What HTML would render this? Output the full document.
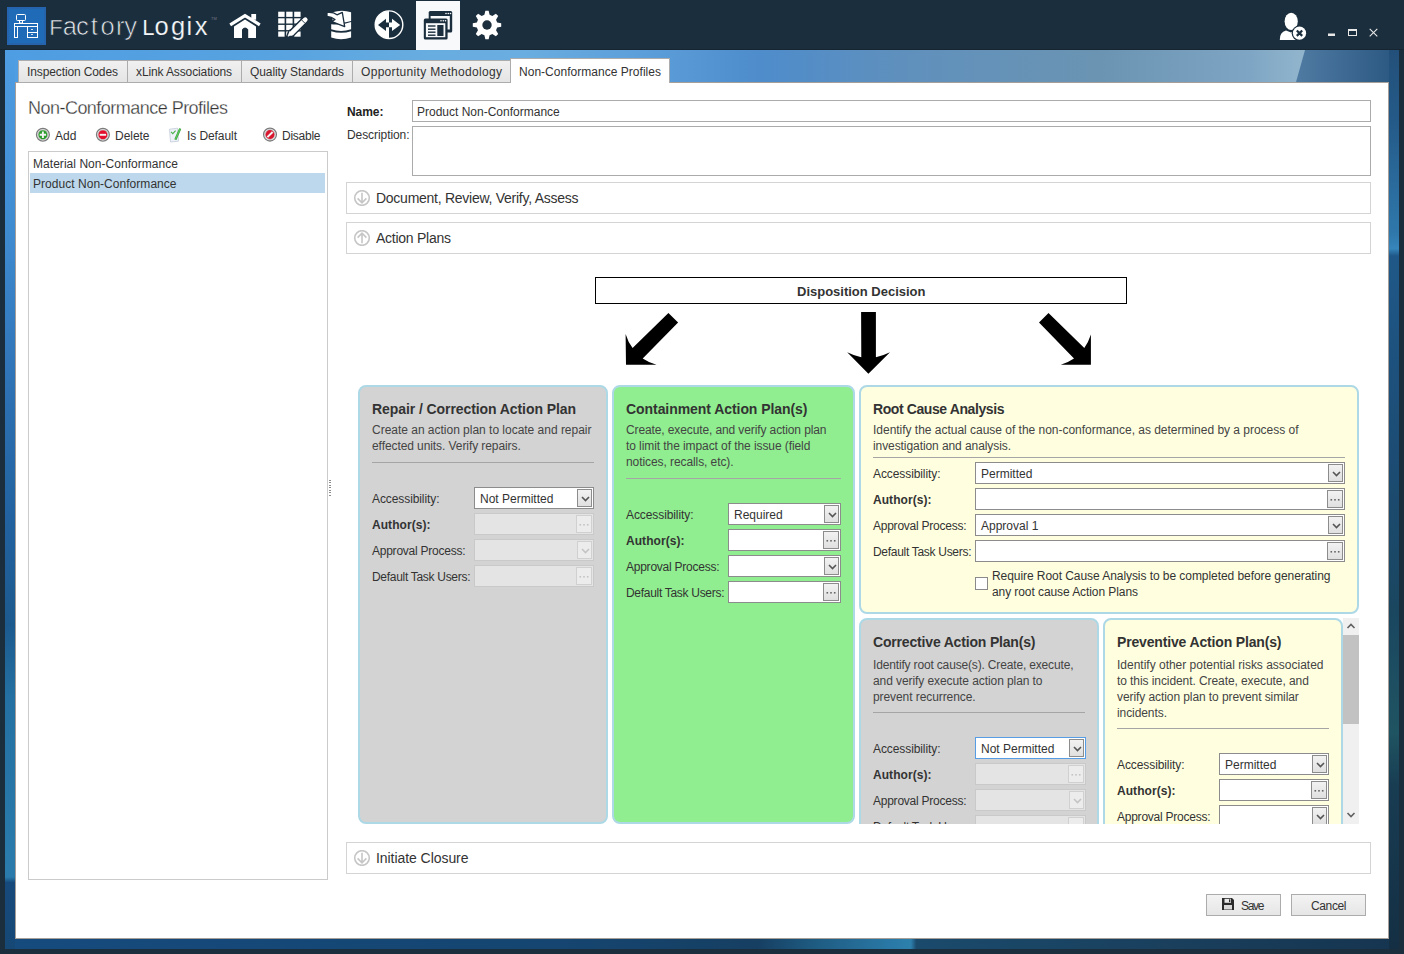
<!DOCTYPE html><html><head><meta charset="utf-8"><style>
html,body{margin:0;padding:0;}
body{width:1404px;height:954px;position:relative;overflow:hidden;background:#1b2e3d;font-family:'Liberation Sans', sans-serif;}
.t{position:absolute;white-space:nowrap;font-family:'Liberation Sans', sans-serif;}
</style></head><body>
<div style="position:absolute;left:5px;top:50px;width:1394px;height:899px;background:#1d5a92"></div>
<div style="position:absolute;left:5px;top:50px;width:10px;height:899px;background:linear-gradient(180deg,#4f9de2 0%,#3f8bd2 20%,#2c6fb0 40%,#2262a0 52%,#1c5a8e 64%,#2470a2 72%,#2a7aac 90%,#2a7aac 92%,#174a7c 92.6%,#164876 100%)"></div>
<div style="position:absolute;left:1389px;top:50px;width:10px;height:899px;background:linear-gradient(180deg,#23507a 0%,#245a88 8%,#2f78ac 20.5%,#3685bb 22.1%,#1f5888 22.9%,#1c4c74 45%,#1a4660 62%,#1f5462 76%,#183c52 82%,#142f44 100%)"></div>
<div style="position:absolute;left:15px;top:939px;width:1374px;height:10px;background:linear-gradient(90deg,#164b7e 0%,#154570 40%,#163f62 54%,#1e5a80 58%,#2a7aa8 64%,#2d80ac 65.2%,#1a4a6c 65.6%,#1a4260 80%,#163550 100%)"></div>
<div style="position:absolute;left:15px;top:50px;width:1374px;height:32px;overflow:hidden;background:linear-gradient(90deg,#4f9de2 0%,#58a3e0 20%,#68ade0 30%,#6aade0 37%,#60a3dc 43%,#5a9cd8 47%,#4e8ccb 54.2%,#5f90bd 64.4%,#6b94b2 79%,#7ea6c4 89.9%,#90b4cc 93.5%)"><div style="position:absolute;left:1281px;top:0;width:120px;height:32px;background:linear-gradient(90deg,#4f7ba3,#23507a);clip-path:polygon(9px 0,120px 0,120px 32px,0 32px)"></div></div>
<div style="position:absolute;left:0;top:49px;width:1404px;height:1px;background:#16252f"></div>
<div style="position:absolute;left:15px;top:82px;width:1374px;height:857px;box-sizing:border-box;background:#fff;border:1px solid #a59e99"></div>
<div style="position:absolute;left:7px;top:7px;width:39px;height:38px;background:#1f6bb7;box-shadow:inset 0 0 0 2px #2563ad"></div>
<svg style="position:absolute;left:7px;top:7px" width="39" height="38" viewBox="0 0 39 38">
<g fill="none" stroke="#fff" stroke-width="1">
<rect x="9.5" y="7.5" width="9" height="6" rx="1"/>
<rect x="12.5" y="13.5" width="3" height="2.5"/>
<rect x="7.5" y="16.5" width="23" height="3"/>
<rect x="7.5" y="19.5" width="3" height="11"/>
<rect x="20.5" y="19.5" width="10" height="11"/>
<line x1="20.5" y1="25.5" x2="30.5" y2="25.5"/>
</g>
<rect x="24" y="22" width="2" height="1" fill="#cfe0f0"/><rect x="24" y="27" width="2" height="1" fill="#cfe0f0"/>
</svg>
<div class="t" style="left:49.3px;top:17px;font-size:22px;line-height:22px;color:#e4e8ec;-webkit-text-stroke:0.55px #1b2e3d">F</div>
<div class="t" style="left:62.7px;top:14px;font-size:25.5px;line-height:25.5px;color:#e4e8ec;-webkit-text-stroke:0.7px #1b2e3d">a</div>
<div class="t" style="left:76.0px;top:14px;font-size:25.5px;line-height:25.5px;color:#e4e8ec;-webkit-text-stroke:0.7px #1b2e3d">c</div>
<div class="t" style="left:90.7px;top:14px;font-size:25.5px;line-height:25.5px;color:#e4e8ec;-webkit-text-stroke:0.7px #1b2e3d">t</div>
<div class="t" style="left:100.5px;top:14px;font-size:25.5px;line-height:25.5px;color:#e4e8ec;-webkit-text-stroke:0.7px #1b2e3d">o</div>
<div class="t" style="left:116.0px;top:14px;font-size:25.5px;line-height:25.5px;color:#e4e8ec;-webkit-text-stroke:0.7px #1b2e3d">r</div>
<div class="t" style="left:124.3px;top:14px;font-size:25.5px;line-height:25.5px;color:#e4e8ec;-webkit-text-stroke:0.7px #1b2e3d">y</div>
<div class="t" style="left:142.2px;top:17px;font-size:22px;line-height:22px;color:#f4f6f8;-webkit-text-stroke:0.1px #1b2e3d">L</div>
<div class="t" style="left:154.4px;top:14px;font-size:25.5px;line-height:25.5px;color:#f4f6f8;-webkit-text-stroke:0.2px #1b2e3d">o</div>
<div class="t" style="left:171.0px;top:14px;font-size:25.5px;line-height:25.5px;color:#f4f6f8;-webkit-text-stroke:0.2px #1b2e3d">g</div>
<div class="t" style="left:186.4px;top:14px;font-size:25.5px;line-height:25.5px;color:#f4f6f8;-webkit-text-stroke:0.2px #1b2e3d">i</div>
<div class="t" style="left:194.7px;top:14px;font-size:25.5px;line-height:25.5px;color:#f4f6f8;-webkit-text-stroke:0.2px #1b2e3d">x</div>
<div class="t" style="left:211px;top:17px;font-size:4px;line-height:4px;color:#778">TM</div>
<svg style="position:absolute;left:228px;top:12px" width="34" height="28" viewBox="0 0 34 28">
<path d="M2.2 12.8 L17 3.6 L31.8 12.8" fill="none" stroke="#fff" stroke-width="3.2"/>
<rect x="23.3" y="2" width="4.8" height="5.7" fill="#fff"/>
<path d="M6 14.5 L17 7.6 L28 14.5 L28 26 L20.2 26 L20.2 17.5 Q17 13.5 14 17.5 L14 26 L6 26 Z" fill="#fff"/>
</svg>
<svg style="position:absolute;left:276px;top:8px" width="36" height="32" viewBox="0 0 36 32"><rect x="2.2" y="3.7" width="6.4" height="5.2" fill="#fff"/><rect x="10.2" y="3.7" width="6.4" height="5.2" fill="#fff"/><rect x="18.2" y="3.7" width="6.4" height="5.2" fill="#fff"/><rect x="2.2" y="10.3" width="6.4" height="5.2" fill="#fff"/><rect x="10.2" y="10.3" width="6.4" height="5.2" fill="#fff"/><rect x="18.2" y="10.3" width="6.4" height="5.2" fill="#fff"/><rect x="2.2" y="16.9" width="6.4" height="5.2" fill="#fff"/><rect x="10.2" y="16.9" width="6.4" height="5.2" fill="#fff"/><rect x="18.2" y="16.9" width="6.4" height="5.2" fill="#fff"/><rect x="2.2" y="23.499999999999996" width="6.4" height="5.2" fill="#fff"/><rect x="10.2" y="23.499999999999996" width="6.4" height="5.2" fill="#fff"/><rect x="18.2" y="23.499999999999996" width="6.4" height="5.2" fill="#fff"/><g transform="translate(-276 -8)"><path d="M305.3 19.6 L291.2 33.7" stroke="#1b2e3d" stroke-width="7.4" stroke-linecap="round"/><path d="M290 30.6 L286.6 37.6 L293.7 34.2 Z" fill="#1b2e3d" stroke="#1b2e3d" stroke-width="2.2" stroke-linejoin="round"/><path d="M305.3 19.6 L291.6 33.3" stroke="#fff" stroke-width="4.6" stroke-linecap="round"/><path d="M289.9 31.5 L288 36.2 L292.7 34.3 Z" fill="#fff" stroke="#fff" stroke-width="0.8" stroke-linejoin="round"/><path d="M301.6 19.9 L304.9 23.2" stroke="#1b2e3d" stroke-width="0.9"/></g></svg>
<svg style="position:absolute;left:324px;top:8px" width="30" height="34" viewBox="324 8 30 34">
<path d="M332.6 12.2 Q342 9.2 351.1 12.2 L351.1 21 Q345 23 338 22.6 L332.6 21.6 Z" fill="#fff"/>
<path d="M331.2 24.2 Q342 25.2 351.1 21.9 L351.1 29.3 Q341 32.6 331.2 29.3 Z" fill="#fff"/>
<path d="M331.2 31.3 Q341 34.4 351.1 31.3 L351.1 37.4 Q341 40.9 331.2 37.4 Z" fill="#fff"/>
<path d="M327 12.4 Q333 11.6 337 14.8 L342.3 12.4 L344.7 26.6 L331.8 21.6 L335 19.4 Q331.5 16.6 327 16.4 Z" fill="#fff" stroke="#1b2e3d" stroke-width="1.3" stroke-linejoin="round"/>
</svg>
<svg style="position:absolute;left:373px;top:9px" width="32" height="32" viewBox="0 0 32 32">
<circle cx="16" cy="15.7" r="13.8" fill="#1b2e3d" stroke="#fff" stroke-width="1.4"/>
<path d="M16 1.9 A13.8 13.8 0 0 0 16 29.5 Z" fill="#fff"/>
<path d="M5 15.9 L13 9.8 L13 13.6 L16.1 13.6 L16.1 18.2 L13 18.2 L13 22 Z" fill="#1b2e3d"/>
<path d="M27.2 15.9 L19 9.8 L19 13.6 L16 13.6 L16 18.2 L19 18.2 L19 22 Z" fill="#fff"/>
</svg>
<div style="position:absolute;left:416px;top:1px;width:44px;height:49px;background:#f8f9fb"></div>
<svg style="position:absolute;left:416px;top:1px" width="44" height="49" viewBox="0 0 44 49">
<rect x="12.7" y="10" width="23.5" height="21.4" rx="1.5" fill="#1b2e3d"/>
<rect x="14.6" y="15" width="19.2" height="13.5" fill="#f8f9fb"/>
<rect x="7.8" y="17.5" width="23.8" height="21" rx="1.5" fill="#1b2e3d"/>
<rect x="9.9" y="22.2" width="19.4" height="14" fill="#f8f9fb"/>
<g fill="#f8f9fb"><circle cx="30" cy="12.5" r="0.8"/><circle cx="32.3" cy="12.5" r="0.8"/><circle cx="34.5" cy="12.5" r="0.8"/>
<circle cx="25" cy="19.8" r="0.8"/><circle cx="27.3" cy="19.8" r="0.8"/><circle cx="29.5" cy="19.8" r="0.8"/></g>
<g fill="#1b2e3d"><rect x="12" y="24.3" width="7.5" height="1.4"/><rect x="12" y="27.5" width="7.5" height="1.4"/><rect x="12" y="30.5" width="7.5" height="1.4"/><rect x="12" y="33.5" width="7.5" height="1.4"/>
<rect x="21.3" y="24" width="6.2" height="11"/></g>
</svg>
<svg style="position:absolute;left:463px;top:1px" width="48" height="48" viewBox="0 0 48 48">
<polygon points="21.40,13.83 22.36,9.79 25.64,9.79 26.60,13.83 29.36,14.97 32.88,12.79 35.21,15.12 33.03,18.64 34.17,21.40 38.21,22.36 38.21,25.64 34.17,26.60 33.03,29.36 35.21,32.88 32.88,35.21 29.36,33.03 26.60,34.17 25.64,38.21 22.36,38.21 21.40,34.17 18.64,33.03 15.12,35.21 12.79,32.88 14.97,29.36 13.83,26.60 9.79,25.64 9.79,22.36 13.83,21.40 14.97,18.64 12.79,15.12 15.12,12.79 18.64,14.97" fill="#fff"/>
<circle cx="24" cy="24" r="4.7" fill="#1b2e3d"/>
</svg>
<svg style="position:absolute;left:1276px;top:8px" width="34" height="34" viewBox="0 0 34 34">
<ellipse cx="15.2" cy="13.3" rx="6.6" ry="8.6" fill="#fff"/>
<path d="M3.8 32 Q3.5 24 10 22.5 L15 24.5 L20 22.5 Q23 23.5 24 25 L24 32 Z" fill="#fff"/>
<circle cx="23.5" cy="25.2" r="7.8" fill="#1b2e3d"/>
<circle cx="23.5" cy="25.2" r="6.6" fill="#fff"/>
<path d="M20.8 22.5 L26.2 27.9 M26.2 22.5 L20.8 27.9" stroke="#1b2e3d" stroke-width="2.2"/>
</svg>
<div style="position:absolute;left:1328px;top:34px;width:7px;height:2px;box-sizing:border-box;background:#e8e8e8"></div>
<div style="position:absolute;left:1328px;top:33px;width:7px;height:1px;box-sizing:border-box;background:rgba(232,232,232,0.5)"></div>
<div style="position:absolute;left:1348px;top:29px;width:9px;height:7px;box-sizing:border-box;border:1px solid #e8e8e8;border-top-width:2px"></div>
<svg style="position:absolute;left:1369px;top:28px" width="9" height="9" viewBox="0 0 9 9"><path d="M0.7 0.9 L8.3 8.3 M8.3 0.9 L0.7 8.3" stroke="#e8e8e8" stroke-width="1.1"/></svg>
<div style="position:absolute;left:18px;top:60px;width:110px;height:23px;box-sizing:border-box;border:1px solid #acacac;background:linear-gradient(#f0f0f0,#e5e5e5)"></div>
<div class="t" style="left:27px;top:66px;font-size:12px;line-height:12px;font-weight:400;color:#333;letter-spacing:-0.116px;">Inspection Codes</div>
<div style="position:absolute;left:127px;top:60px;width:115px;height:23px;box-sizing:border-box;border:1px solid #acacac;background:linear-gradient(#f0f0f0,#e5e5e5)"></div>
<div class="t" style="left:136px;top:66px;font-size:12px;line-height:12px;font-weight:400;color:#333;letter-spacing:-0.121px;">xLink Associations</div>
<div style="position:absolute;left:241px;top:60px;width:112px;height:23px;box-sizing:border-box;border:1px solid #acacac;background:linear-gradient(#f0f0f0,#e5e5e5)"></div>
<div class="t" style="left:250px;top:66px;font-size:12px;line-height:12px;font-weight:400;color:#333;letter-spacing:-0.087px;">Quality Standards</div>
<div style="position:absolute;left:352px;top:60px;width:159px;height:23px;box-sizing:border-box;border:1px solid #acacac;background:linear-gradient(#f0f0f0,#e5e5e5)"></div>
<div class="t" style="left:361px;top:66px;font-size:12px;line-height:12px;font-weight:400;color:#333;letter-spacing:0.314px;">Opportunity Methodology</div>
<div style="position:absolute;left:510px;top:58px;width:160px;height:25px;box-sizing:border-box;border:1px solid #acacac;border-bottom:none;background:#fff"></div>
<div class="t" style="left:519px;top:66px;font-size:12px;line-height:12px;font-weight:400;color:#333;letter-spacing:0.026px;">Non-Conformance Profiles</div>
<div class="t" style="left:28px;top:99px;font-size:18px;line-height:18px;font-weight:400;color:#333;letter-spacing:-0.526px;-webkit-text-stroke:0.3px #fff;">Non-Conformance Profiles</div>
<svg style="position:absolute;left:35px;top:127px" width="16" height="16" viewBox="0 0 16 16">
<circle cx="7.9" cy="7.8" r="6.4" fill="#fff" stroke="#7c7c7c" stroke-width="1.3"/>
<circle cx="7.9" cy="7.8" r="5" fill="none" stroke="#a8a8a8" stroke-width="0.7"/>
<circle cx="7.9" cy="7.8" r="4.5" fill="#2b9b2b"/>
<path d="M7.9 4.6 V11 M4.7 7.8 H11.1" stroke="#f4f4f4" stroke-width="1.9"/></svg>
<div class="t" style="left:55px;top:130px;font-size:12px;line-height:12px;font-weight:400;color:#333;letter-spacing:0.07px;">Add</div>
<svg style="position:absolute;left:95px;top:127px" width="16" height="16" viewBox="0 0 16 16">
<circle cx="7.9" cy="7.8" r="6.4" fill="#fff" stroke="#7c7c7c" stroke-width="1.3"/>
<circle cx="7.9" cy="7.8" r="5" fill="none" stroke="#a8a8a8" stroke-width="0.7"/>
<circle cx="7.9" cy="7.8" r="4.5" fill="#e2102c"/>
<path d="M4.7 7.8 H11.1" stroke="#f4f4f4" stroke-width="1.9"/></svg>
<div class="t" style="left:115px;top:130px;font-size:12px;line-height:12px;font-weight:400;color:#333;letter-spacing:-0.037px;">Delete</div>
<svg style="position:absolute;left:168px;top:127px" width="14" height="16" viewBox="0 0 14 16">
<path d="M1.5 2.2 L9.5 1.2 L10.5 14.2 L2.5 15 Z" fill="#eef2f8" stroke="#c4ccd8" stroke-width="0.8"/>
<path d="M3 4.8 L4.8 6.6 L7.6 3.6" fill="none" stroke="#4cb04c" stroke-width="1.1"/>
<path d="M12.2 1.6 L7.4 12.6" stroke="#3a9a3a" stroke-width="2.3"/><path d="M12.2 1.6 L7.4 12.6" stroke="#5cc85c" stroke-width="1.2"/></svg>
<div class="t" style="left:187px;top:130px;font-size:12px;line-height:12px;font-weight:400;color:#333;letter-spacing:-0.078px;">Is Default</div>
<svg style="position:absolute;left:262px;top:127px" width="16" height="16" viewBox="0 0 16 16">
<circle cx="8" cy="7.6" r="6.4" fill="#fff" stroke="#7c7c7c" stroke-width="1.3"/>
<circle cx="8" cy="7.6" r="5" fill="none" stroke="#a8a8a8" stroke-width="0.7"/>
<circle cx="8" cy="7.6" r="4.5" fill="#d8162e"/>
<path d="M5.4 10.2 L10.6 5" stroke="#f4f4f4" stroke-width="1.9"/></svg>
<div class="t" style="left:282px;top:130px;font-size:12px;line-height:12px;font-weight:400;color:#333;letter-spacing:-0.255px;">Disable</div>
<div style="position:absolute;left:28px;top:151px;width:300px;height:729px;box-sizing:border-box;border:1px solid #cbcbcb;background:#fff"></div>
<div style="position:absolute;left:30px;top:173px;width:295px;height:20px;box-sizing:border-box;background:#bdd8ec"></div>
<div class="t" style="left:33px;top:158px;font-size:12px;line-height:12px;font-weight:400;color:#333;letter-spacing:0.041px;">Material Non-Conformance</div>
<div class="t" style="left:33px;top:178px;font-size:12px;line-height:12px;font-weight:400;color:#333;letter-spacing:0.035px;">Product Non-Conformance</div>
<div style="position:absolute;left:329px;top:480px;width:2px;height:1px;box-sizing:border-box;background:#8c8c8c"></div>
<div style="position:absolute;left:329px;top:482px;width:2px;height:1px;box-sizing:border-box;background:#8c8c8c"></div>
<div style="position:absolute;left:329px;top:485px;width:2px;height:1px;box-sizing:border-box;background:#8c8c8c"></div>
<div style="position:absolute;left:329px;top:487px;width:2px;height:1px;box-sizing:border-box;background:#8c8c8c"></div>
<div style="position:absolute;left:329px;top:490px;width:2px;height:1px;box-sizing:border-box;background:#8c8c8c"></div>
<div style="position:absolute;left:329px;top:492px;width:2px;height:1px;box-sizing:border-box;background:#8c8c8c"></div>
<div style="position:absolute;left:329px;top:495px;width:2px;height:1px;box-sizing:border-box;background:#8c8c8c"></div>
<div class="t" style="left:347px;top:106px;font-size:12px;line-height:12px;font-weight:700;color:#222;letter-spacing:-0.047px;">Name:</div>
<div style="position:absolute;left:412px;top:100px;width:959px;height:22px;box-sizing:border-box;border:1px solid #ababab;background:#fff"></div>
<div class="t" style="left:417px;top:106px;font-size:12px;line-height:12px;font-weight:400;color:#333;">Product Non-Conformance</div>
<div class="t" style="left:347px;top:129px;font-size:12px;line-height:12px;font-weight:400;color:#333;letter-spacing:-0.078px;">Description:</div>
<div style="position:absolute;left:412px;top:126px;width:959px;height:50px;box-sizing:border-box;border:1px solid #ababab;background:#fff"></div>
<div style="position:absolute;left:346px;top:182px;width:1025px;height:32px;box-sizing:border-box;border:1px solid #d4d4d4;background:#fff"></div>
<svg style="position:absolute;left:353px;top:190px" width="18" height="16" viewBox="0 0 18 16"><circle cx="9" cy="8" r="7.3" fill="none" stroke="#c6c6c6" stroke-width="1.6"/><path d="M9 2.8 V12.8 M4.6 8.4 L9 12.8 L13.4 8.4" fill="none" stroke="#c6c6c6" stroke-width="1.6"/></svg>
<div class="t" style="left:376px;top:191px;font-size:14px;line-height:14px;font-weight:400;color:#333;letter-spacing:-0.262px;">Document, Review, Verify, Assess</div>
<div style="position:absolute;left:346px;top:222px;width:1025px;height:32px;box-sizing:border-box;border:1px solid #d4d4d4;background:#fff"></div>
<svg style="position:absolute;left:353px;top:230px" width="18" height="16" viewBox="0 0 18 16"><circle cx="9" cy="8" r="7.3" fill="none" stroke="#c6c6c6" stroke-width="1.6"/><path d="M9 3.2 V13.2 M4.6 7.6 L9 3.2 L13.4 7.6" fill="none" stroke="#c6c6c6" stroke-width="1.6"/></svg>
<div class="t" style="left:376px;top:231px;font-size:14px;line-height:14px;font-weight:400;color:#333;letter-spacing:-0.257px;">Action Plans</div>
<div style="position:absolute;left:346px;top:842px;width:1025px;height:32px;box-sizing:border-box;border:1px solid #d4d4d4;background:#fff"></div>
<svg style="position:absolute;left:353px;top:850px" width="18" height="16" viewBox="0 0 18 16"><circle cx="9" cy="8" r="7.3" fill="none" stroke="#c6c6c6" stroke-width="1.6"/><path d="M9 2.8 V12.8 M4.6 8.4 L9 12.8 L13.4 8.4" fill="none" stroke="#c6c6c6" stroke-width="1.6"/></svg>
<div class="t" style="left:376px;top:851px;font-size:14px;line-height:14px;font-weight:400;color:#333;letter-spacing:-0.059px;">Initiate Closure</div>
<div style="position:absolute;left:595px;top:277px;width:532px;height:27px;box-sizing:border-box;border:1px solid #000;background:#fff"></div>
<div class="t" style="left:797px;top:285px;font-size:13px;line-height:13px;font-weight:700;color:#333;letter-spacing:-0.004px;">Disposition Decision</div>
<svg style="position:absolute;left:600px;top:300px" width="520" height="80" viewBox="600 300 520 80">
<path d="M668.4 312.9 L678.1 322.5 L642.7 358.4 Q648 362 656.5 364.8 L626 364.8 L625.6 334 Q628 342 632.6 348 Z" fill="#000"/>
<path d="M1048.5 312.9 L1039 322.5 L1074 358.4 Q1068.7 362 1060.8 364.8 L1090.9 364.8 L1090.9 334.4 Q1088.5 342 1084.3 347.9 Z" fill="#000"/>
<path d="M861.1 311.9 L875.9 311.9 L875.9 357.3 Q882 356 890 352.2 L868.4 373.8 L847.2 352.2 Q855 356 861.3 357.3 Z" fill="#000"/>
</svg>
<div style="position:absolute;left:358px;top:385px;width:250px;height:439px;box-sizing:border-box;border:2px solid #add8e6;border-radius:8px;background:#d3d3d3"></div>
<div class="t" style="left:372px;top:402px;font-size:14px;line-height:14px;font-weight:700;color:#333;letter-spacing:-0.08px;">Repair / Correction Action Plan</div>
<div class="t" style="left:372px;top:424px;font-size:12px;line-height:12px;font-weight:400;color:#444;letter-spacing:-0.016px;">Create an action plan to locate and repair</div>
<div class="t" style="left:372px;top:440px;font-size:12px;line-height:12px;font-weight:400;color:#444;letter-spacing:-0.08px;">effected units. Verify repairs.</div>
<div style="position:absolute;left:372px;top:462px;width:222px;height:1px;box-sizing:border-box;background:#a5a5a5"></div>
<div class="t" style="left:372px;top:493px;font-size:12px;line-height:12px;font-weight:400;color:#333;letter-spacing:-0.091px;">Accessibility:</div>
<div style="position:absolute;left:474px;top:487px;width:120px;height:22px;box-sizing:border-box;background:#fff;border:1px solid rgba(0,0,0,0.45)"></div>
<div class="t" style="left:480px;top:493px;font-size:12px;line-height:12px;font-weight:400;color:#333;">Not Permitted</div>
<div style="position:absolute;left:577px;top:489px;width:15px;height:18px;box-sizing:border-box;border:1px solid #8c8c8c;background:linear-gradient(#f2f2f2,#e0e0e0)"><svg width="15" height="18" style="position:absolute;left:0;top:0"><path d="M4 7 L7.5 10.5 L11 7" fill="none" stroke="#555" stroke-width="1.6"/></svg></div>
<div class="t" style="left:372px;top:519px;font-size:12px;line-height:12px;font-weight:700;color:#333;letter-spacing:0.057px;">Author(s):</div>
<div style="position:absolute;left:474px;top:513px;width:120px;height:22px;box-sizing:border-box;background:#e4e4e4;border:1px solid #c9c9c9"></div>
<div style="position:absolute;left:576px;top:515px;width:16px;height:18px;box-sizing:border-box;border:1px solid #d0d0d0;background:#ececec"><svg width="16" height="18" style="position:absolute;left:-1px;top:-1px"><rect x="3.5" y="9" width="1.6" height="1.6" fill="#c4c4c4"/><rect x="7.2" y="9" width="1.6" height="1.6" fill="#c4c4c4"/><rect x="10.9" y="9" width="1.6" height="1.6" fill="#c4c4c4"/></svg></div>
<div class="t" style="left:372px;top:545px;font-size:12px;line-height:12px;font-weight:400;color:#333;letter-spacing:-0.243px;">Approval Process:</div>
<div style="position:absolute;left:474px;top:539px;width:120px;height:22px;box-sizing:border-box;background:#e4e4e4;border:1px solid #c9c9c9"></div>
<div style="position:absolute;left:577px;top:541px;width:15px;height:18px;box-sizing:border-box;border:1px solid #d0d0d0;background:#ececec"><svg width="15" height="18" style="position:absolute;left:0;top:0"><path d="M4 7 L7.5 10.5 L11 7" fill="none" stroke="#c4c4c4" stroke-width="1.6"/></svg></div>
<div class="t" style="left:372px;top:571px;font-size:12px;line-height:12px;font-weight:400;color:#333;letter-spacing:-0.296px;">Default Task Users:</div>
<div style="position:absolute;left:474px;top:565px;width:120px;height:22px;box-sizing:border-box;background:#e4e4e4;border:1px solid #c9c9c9"></div>
<div style="position:absolute;left:576px;top:567px;width:16px;height:18px;box-sizing:border-box;border:1px solid #d0d0d0;background:#ececec"><svg width="16" height="18" style="position:absolute;left:-1px;top:-1px"><rect x="3.5" y="9" width="1.6" height="1.6" fill="#c4c4c4"/><rect x="7.2" y="9" width="1.6" height="1.6" fill="#c4c4c4"/><rect x="10.9" y="9" width="1.6" height="1.6" fill="#c4c4c4"/></svg></div>
<div style="position:absolute;left:612px;top:385px;width:243px;height:439px;box-sizing:border-box;border:2px solid #add8e6;border-radius:8px;background:#90ee90"></div>
<div class="t" style="left:626px;top:402px;font-size:14px;line-height:14px;font-weight:700;color:#333;letter-spacing:-0.062px;">Containment Action Plan(s)</div>
<div class="t" style="left:626px;top:424px;font-size:12px;line-height:12px;font-weight:400;color:#444;letter-spacing:-0.113px;">Create, execute, and verify action plan</div>
<div class="t" style="left:626px;top:440px;font-size:12px;line-height:12px;font-weight:400;color:#444;letter-spacing:-0.08px;">to limit the impact of the issue (field</div>
<div class="t" style="left:626px;top:456px;font-size:12px;line-height:12px;font-weight:400;color:#444;letter-spacing:-0.08px;">notices, recalls, etc).</div>
<div style="position:absolute;left:626px;top:478px;width:215px;height:1px;box-sizing:border-box;background:#a5a5a5"></div>
<div class="t" style="left:626px;top:509px;font-size:12px;line-height:12px;font-weight:400;color:#333;letter-spacing:-0.091px;">Accessibility:</div>
<div style="position:absolute;left:728px;top:503px;width:113px;height:22px;box-sizing:border-box;background:#fff;border:1px solid rgba(0,0,0,0.45)"></div>
<div class="t" style="left:734px;top:509px;font-size:12px;line-height:12px;font-weight:400;color:#333;">Required</div>
<div style="position:absolute;left:824px;top:505px;width:15px;height:18px;box-sizing:border-box;border:1px solid #8c8c8c;background:linear-gradient(#f2f2f2,#e0e0e0)"><svg width="15" height="18" style="position:absolute;left:0;top:0"><path d="M4 7 L7.5 10.5 L11 7" fill="none" stroke="#555" stroke-width="1.6"/></svg></div>
<div class="t" style="left:626px;top:535px;font-size:12px;line-height:12px;font-weight:700;color:#333;letter-spacing:0.057px;">Author(s):</div>
<div style="position:absolute;left:728px;top:529px;width:113px;height:22px;box-sizing:border-box;background:#fff;border:1px solid rgba(0,0,0,0.45)"></div>
<div style="position:absolute;left:823px;top:531px;width:16px;height:18px;box-sizing:border-box;border:1px solid #8c8c8c;background:linear-gradient(#f2f2f2,#e0e0e0)"><svg width="16" height="18" style="position:absolute;left:-1px;top:-1px"><rect x="3.5" y="9" width="1.6" height="1.6" fill="#666"/><rect x="7.2" y="9" width="1.6" height="1.6" fill="#666"/><rect x="10.9" y="9" width="1.6" height="1.6" fill="#666"/></svg></div>
<div class="t" style="left:626px;top:561px;font-size:12px;line-height:12px;font-weight:400;color:#333;letter-spacing:-0.243px;">Approval Process:</div>
<div style="position:absolute;left:728px;top:555px;width:113px;height:22px;box-sizing:border-box;background:#fff;border:1px solid rgba(0,0,0,0.45)"></div>
<div style="position:absolute;left:824px;top:557px;width:15px;height:18px;box-sizing:border-box;border:1px solid #8c8c8c;background:linear-gradient(#f2f2f2,#e0e0e0)"><svg width="15" height="18" style="position:absolute;left:0;top:0"><path d="M4 7 L7.5 10.5 L11 7" fill="none" stroke="#555" stroke-width="1.6"/></svg></div>
<div class="t" style="left:626px;top:587px;font-size:12px;line-height:12px;font-weight:400;color:#333;letter-spacing:-0.296px;">Default Task Users:</div>
<div style="position:absolute;left:728px;top:581px;width:113px;height:22px;box-sizing:border-box;background:#fff;border:1px solid rgba(0,0,0,0.45)"></div>
<div style="position:absolute;left:823px;top:583px;width:16px;height:18px;box-sizing:border-box;border:1px solid #8c8c8c;background:linear-gradient(#f2f2f2,#e0e0e0)"><svg width="16" height="18" style="position:absolute;left:-1px;top:-1px"><rect x="3.5" y="9" width="1.6" height="1.6" fill="#666"/><rect x="7.2" y="9" width="1.6" height="1.6" fill="#666"/><rect x="10.9" y="9" width="1.6" height="1.6" fill="#666"/></svg></div>
<div style="position:absolute;left:859px;top:385px;width:500px;height:229px;box-sizing:border-box;border:2px solid #add8e6;border-radius:8px;background:#ffffe0"></div>
<div class="t" style="left:873px;top:402px;font-size:14px;line-height:14px;font-weight:700;color:#333;letter-spacing:-0.403px;">Root Cause Analysis</div>
<div class="t" style="left:873px;top:424px;font-size:12px;line-height:12px;font-weight:400;color:#444;letter-spacing:-0.018px;">Identify the actual cause of the non-conformance, as determined by a process of</div>
<div class="t" style="left:873px;top:440px;font-size:12px;line-height:12px;font-weight:400;color:#444;letter-spacing:-0.08px;">investigation and analysis.</div>
<div style="position:absolute;left:873px;top:457px;width:472px;height:1px;box-sizing:border-box;background:#a5a5a5"></div>
<div class="t" style="left:873px;top:468px;font-size:12px;line-height:12px;font-weight:400;color:#333;letter-spacing:-0.091px;">Accessibility:</div>
<div style="position:absolute;left:975px;top:462px;width:370px;height:22px;box-sizing:border-box;background:#fff;border:1px solid rgba(0,0,0,0.45)"></div>
<div class="t" style="left:981px;top:468px;font-size:12px;line-height:12px;font-weight:400;color:#333;">Permitted</div>
<div style="position:absolute;left:1328px;top:464px;width:15px;height:18px;box-sizing:border-box;border:1px solid #8c8c8c;background:linear-gradient(#f2f2f2,#e0e0e0)"><svg width="15" height="18" style="position:absolute;left:0;top:0"><path d="M4 7 L7.5 10.5 L11 7" fill="none" stroke="#555" stroke-width="1.6"/></svg></div>
<div class="t" style="left:873px;top:494px;font-size:12px;line-height:12px;font-weight:700;color:#333;letter-spacing:0.057px;">Author(s):</div>
<div style="position:absolute;left:975px;top:488px;width:370px;height:22px;box-sizing:border-box;background:#fff;border:1px solid rgba(0,0,0,0.45)"></div>
<div style="position:absolute;left:1327px;top:490px;width:16px;height:18px;box-sizing:border-box;border:1px solid #8c8c8c;background:linear-gradient(#f2f2f2,#e0e0e0)"><svg width="16" height="18" style="position:absolute;left:-1px;top:-1px"><rect x="3.5" y="9" width="1.6" height="1.6" fill="#666"/><rect x="7.2" y="9" width="1.6" height="1.6" fill="#666"/><rect x="10.9" y="9" width="1.6" height="1.6" fill="#666"/></svg></div>
<div class="t" style="left:873px;top:520px;font-size:12px;line-height:12px;font-weight:400;color:#333;letter-spacing:-0.243px;">Approval Process:</div>
<div style="position:absolute;left:975px;top:514px;width:370px;height:22px;box-sizing:border-box;background:#fff;border:1px solid rgba(0,0,0,0.45)"></div>
<div class="t" style="left:981px;top:520px;font-size:12px;line-height:12px;font-weight:400;color:#333;">Approval 1</div>
<div style="position:absolute;left:1328px;top:516px;width:15px;height:18px;box-sizing:border-box;border:1px solid #8c8c8c;background:linear-gradient(#f2f2f2,#e0e0e0)"><svg width="15" height="18" style="position:absolute;left:0;top:0"><path d="M4 7 L7.5 10.5 L11 7" fill="none" stroke="#555" stroke-width="1.6"/></svg></div>
<div class="t" style="left:873px;top:546px;font-size:12px;line-height:12px;font-weight:400;color:#333;letter-spacing:-0.296px;">Default Task Users:</div>
<div style="position:absolute;left:975px;top:540px;width:370px;height:22px;box-sizing:border-box;background:#fff;border:1px solid rgba(0,0,0,0.45)"></div>
<div style="position:absolute;left:1327px;top:542px;width:16px;height:18px;box-sizing:border-box;border:1px solid #8c8c8c;background:linear-gradient(#f2f2f2,#e0e0e0)"><svg width="16" height="18" style="position:absolute;left:-1px;top:-1px"><rect x="3.5" y="9" width="1.6" height="1.6" fill="#666"/><rect x="7.2" y="9" width="1.6" height="1.6" fill="#666"/><rect x="10.9" y="9" width="1.6" height="1.6" fill="#666"/></svg></div>
<div style="position:absolute;left:975px;top:577px;width:13px;height:13px;box-sizing:border-box;border:1px solid #8a8a8a;background:#fff"></div>
<div class="t" style="left:992px;top:570px;font-size:12px;line-height:12px;font-weight:400;color:#333;letter-spacing:-0.062px;">Require Root Cause Analysis to be completed before generating</div>
<div class="t" style="left:992px;top:586px;font-size:12px;line-height:12px;font-weight:400;color:#333;letter-spacing:-0.08px;">any root cause Action Plans</div>
<div style="position:absolute;left:859px;top:618px;width:500px;height:206px;overflow:hidden;background:#fff">
<div style="position:absolute;left:0px;top:0px;width:240px;height:260px;box-sizing:border-box;border:2px solid #add8e6;border-radius:8px;background:#d3d3d3"></div><div class="t" style="left:14px;top:17px;font-size:14px;line-height:14px;font-weight:700;color:#333;letter-spacing:-0.177px;">Corrective Action Plan(s)</div><div class="t" style="left:14px;top:41px;font-size:12px;line-height:12px;font-weight:400;color:#444;letter-spacing:-0.161px;">Identify root cause(s). Create, execute,</div><div class="t" style="left:14px;top:57px;font-size:12px;line-height:12px;font-weight:400;color:#444;letter-spacing:-0.08px;">and verify execute action plan to</div><div class="t" style="left:14px;top:73px;font-size:12px;line-height:12px;font-weight:400;color:#444;letter-spacing:-0.08px;">prevent recurrence.</div><div style="position:absolute;left:14px;top:94px;width:212px;height:1px;box-sizing:border-box;background:#a5a5a5"></div><div class="t" style="left:14px;top:125px;font-size:12px;line-height:12px;font-weight:400;color:#333;letter-spacing:-0.091px;">Accessibility:</div><div style="position:absolute;left:116px;top:119px;width:111px;height:22px;box-sizing:border-box;background:#fff;border:1px solid #569de5"></div><div class="t" style="left:122px;top:125px;font-size:12px;line-height:12px;font-weight:400;color:#333;">Not Permitted</div><div style="position:absolute;left:210px;top:121px;width:15px;height:18px;box-sizing:border-box;border:1px solid #8c8c8c;background:linear-gradient(#f2f2f2,#e0e0e0)"><svg width="15" height="18" style="position:absolute;left:0;top:0"><path d="M4 7 L7.5 10.5 L11 7" fill="none" stroke="#555" stroke-width="1.6"/></svg></div><div class="t" style="left:14px;top:151px;font-size:12px;line-height:12px;font-weight:700;color:#333;letter-spacing:0.057px;">Author(s):</div><div style="position:absolute;left:116px;top:145px;width:111px;height:22px;box-sizing:border-box;background:#e4e4e4;border:1px solid #c9c9c9"></div><div style="position:absolute;left:209px;top:147px;width:16px;height:18px;box-sizing:border-box;border:1px solid #d0d0d0;background:#ececec"><svg width="16" height="18" style="position:absolute;left:-1px;top:-1px"><rect x="3.5" y="9" width="1.6" height="1.6" fill="#c4c4c4"/><rect x="7.2" y="9" width="1.6" height="1.6" fill="#c4c4c4"/><rect x="10.9" y="9" width="1.6" height="1.6" fill="#c4c4c4"/></svg></div><div class="t" style="left:14px;top:177px;font-size:12px;line-height:12px;font-weight:400;color:#333;letter-spacing:-0.243px;">Approval Process:</div><div style="position:absolute;left:116px;top:171px;width:111px;height:22px;box-sizing:border-box;background:#e4e4e4;border:1px solid #c9c9c9"></div><div style="position:absolute;left:210px;top:173px;width:15px;height:18px;box-sizing:border-box;border:1px solid #d0d0d0;background:#ececec"><svg width="15" height="18" style="position:absolute;left:0;top:0"><path d="M4 7 L7.5 10.5 L11 7" fill="none" stroke="#c4c4c4" stroke-width="1.6"/></svg></div><div class="t" style="left:14px;top:203px;font-size:12px;line-height:12px;font-weight:400;color:#333;letter-spacing:-0.296px;">Default Task Users:</div><div style="position:absolute;left:116px;top:197px;width:111px;height:22px;box-sizing:border-box;background:#e4e4e4;border:1px solid #c9c9c9"></div><div style="position:absolute;left:209px;top:199px;width:16px;height:18px;box-sizing:border-box;border:1px solid #d0d0d0;background:#ececec"><svg width="16" height="18" style="position:absolute;left:-1px;top:-1px"><rect x="3.5" y="9" width="1.6" height="1.6" fill="#c4c4c4"/><rect x="7.2" y="9" width="1.6" height="1.6" fill="#c4c4c4"/><rect x="10.9" y="9" width="1.6" height="1.6" fill="#c4c4c4"/></svg></div><div style="position:absolute;left:244px;top:0px;width:240px;height:260px;box-sizing:border-box;border:2px solid #add8e6;border-radius:8px;background:#ffffe0"></div><div class="t" style="left:258px;top:17px;font-size:14px;line-height:14px;font-weight:700;color:#333;letter-spacing:-0.159px;">Preventive Action Plan(s)</div><div class="t" style="left:258px;top:41px;font-size:12px;line-height:12px;font-weight:400;color:#444;letter-spacing:-0.007px;">Identify other potential risks associated</div><div class="t" style="left:258px;top:57px;font-size:12px;line-height:12px;font-weight:400;color:#444;letter-spacing:-0.08px;">to this incident. Create, execute, and</div><div class="t" style="left:258px;top:73px;font-size:12px;line-height:12px;font-weight:400;color:#444;letter-spacing:-0.08px;">verify action plan to prevent similar</div><div class="t" style="left:258px;top:89px;font-size:12px;line-height:12px;font-weight:400;color:#444;letter-spacing:-0.08px;">incidents.</div><div style="position:absolute;left:258px;top:110px;width:212px;height:1px;box-sizing:border-box;background:#a5a5a5"></div><div class="t" style="left:258px;top:141px;font-size:12px;line-height:12px;font-weight:400;color:#333;letter-spacing:-0.091px;">Accessibility:</div><div style="position:absolute;left:360px;top:135px;width:110px;height:22px;box-sizing:border-box;background:#fff;border:1px solid rgba(0,0,0,0.45)"></div><div class="t" style="left:366px;top:141px;font-size:12px;line-height:12px;font-weight:400;color:#333;">Permitted</div><div style="position:absolute;left:453px;top:137px;width:15px;height:18px;box-sizing:border-box;border:1px solid #8c8c8c;background:linear-gradient(#f2f2f2,#e0e0e0)"><svg width="15" height="18" style="position:absolute;left:0;top:0"><path d="M4 7 L7.5 10.5 L11 7" fill="none" stroke="#555" stroke-width="1.6"/></svg></div><div class="t" style="left:258px;top:167px;font-size:12px;line-height:12px;font-weight:700;color:#333;letter-spacing:0.057px;">Author(s):</div><div style="position:absolute;left:360px;top:161px;width:110px;height:22px;box-sizing:border-box;background:#fff;border:1px solid rgba(0,0,0,0.45)"></div><div style="position:absolute;left:452px;top:163px;width:16px;height:18px;box-sizing:border-box;border:1px solid #8c8c8c;background:linear-gradient(#f2f2f2,#e0e0e0)"><svg width="16" height="18" style="position:absolute;left:-1px;top:-1px"><rect x="3.5" y="9" width="1.6" height="1.6" fill="#666"/><rect x="7.2" y="9" width="1.6" height="1.6" fill="#666"/><rect x="10.9" y="9" width="1.6" height="1.6" fill="#666"/></svg></div><div class="t" style="left:258px;top:193px;font-size:12px;line-height:12px;font-weight:400;color:#333;letter-spacing:-0.243px;">Approval Process:</div><div style="position:absolute;left:360px;top:187px;width:110px;height:22px;box-sizing:border-box;background:#fff;border:1px solid rgba(0,0,0,0.45)"></div><div style="position:absolute;left:453px;top:189px;width:15px;height:18px;box-sizing:border-box;border:1px solid #8c8c8c;background:linear-gradient(#f2f2f2,#e0e0e0)"><svg width="15" height="18" style="position:absolute;left:0;top:0"><path d="M4 7 L7.5 10.5 L11 7" fill="none" stroke="#555" stroke-width="1.6"/></svg></div><div class="t" style="left:258px;top:219px;font-size:12px;line-height:12px;font-weight:400;color:#333;letter-spacing:-0.296px;">Default Task Users:</div><div style="position:absolute;left:360px;top:213px;width:110px;height:22px;box-sizing:border-box;background:#fff;border:1px solid rgba(0,0,0,0.45)"></div><div style="position:absolute;left:452px;top:215px;width:16px;height:18px;box-sizing:border-box;border:1px solid #8c8c8c;background:linear-gradient(#f2f2f2,#e0e0e0)"><svg width="16" height="18" style="position:absolute;left:-1px;top:-1px"><rect x="3.5" y="9" width="1.6" height="1.6" fill="#666"/><rect x="7.2" y="9" width="1.6" height="1.6" fill="#666"/><rect x="10.9" y="9" width="1.6" height="1.6" fill="#666"/></svg></div><div style="position:absolute;left:484px;top:0px;width:16px;height:206px;box-sizing:border-box;background:#f0f0f0"></div><div style="position:absolute;left:484px;top:17px;width:16px;height:89px;box-sizing:border-box;background:#c2c2c2"></div><svg style="position:absolute;left:484px;top:0" width="16" height="206"><path d="M4.5 10 L8 6.5 L11.5 10" fill="none" stroke="#606060" stroke-width="1.6"/><path d="M4.5 195 L8 198.5 L11.5 195" fill="none" stroke="#606060" stroke-width="1.6"/></svg>
</div>
<div style="position:absolute;left:1206px;top:894px;width:75px;height:22px;box-sizing:border-box;border:1px solid #acacac;background:linear-gradient(#f3f3f3,#e6e6e6)"></div>
<div class="t" style="left:1241px;top:900px;font-size:12px;line-height:12px;font-weight:400;color:#333;letter-spacing:-1.286px;">Save</div>
<svg style="position:absolute;left:1221px;top:897px" width="14" height="14" viewBox="0 0 14 14">
<path d="M1 1 H11 L13 3 V13 H1 Z" fill="#2a2a2a"/><rect x="3.5" y="1.8" width="6.5" height="4" fill="#e8e8e8"/><rect x="8" y="2.3" width="1.3" height="2.8" fill="#2a2a2a"/><rect x="3" y="8" width="8" height="4.5" fill="#d8d8d8"/></svg>
<div style="position:absolute;left:1291px;top:894px;width:75px;height:22px;box-sizing:border-box;border:1px solid #acacac;background:linear-gradient(#f3f3f3,#e6e6e6)"></div>
<div class="t" style="left:1311px;top:900px;font-size:12px;line-height:12px;font-weight:400;color:#333;letter-spacing:-0.372px;">Cancel</div>
</body></html>
